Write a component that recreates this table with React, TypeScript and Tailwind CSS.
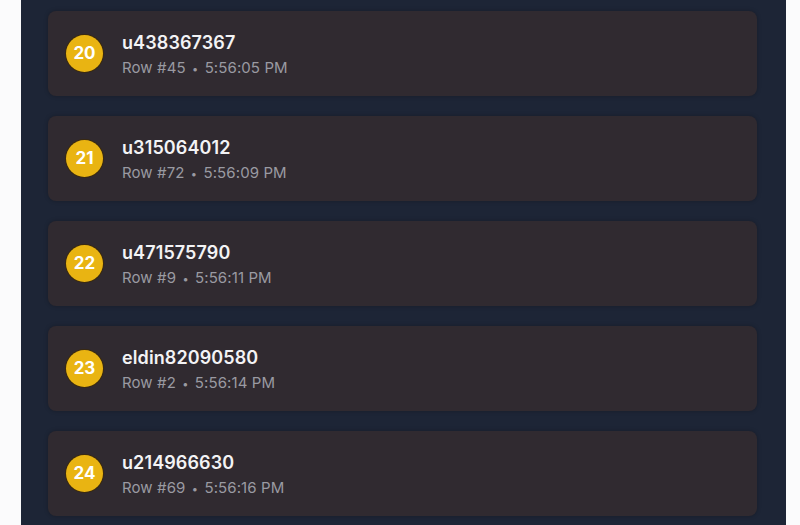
import React from "react";

type Entry = { rank: number; name: string; row: number; time: string };

const entries: Entry[] = [
  { rank: 20, name: "u438367367", row: 45, time: "5:56:05 PM" },
  { rank: 21, name: "u315064012", row: 72, time: "5:56:09 PM" },
  { rank: 22, name: "u471575790", row: 9, time: "5:56:11 PM" },
  { rank: 23, name: "eldin82090580", row: 2, time: "5:56:14 PM" },
  { rank: 24, name: "u214966630", row: 69, time: "5:56:16 PM" },
];

function EntryCard({ rank, name, row, time }: Entry) {
  return (
    <div className="flex h-[85px] items-center gap-[19px] rounded-lg bg-[#302a30] pl-[18px] shadow-[0_0_4px_rgba(0,0,0,0.25)]">
      <div className="flex h-[37px] w-[37px] shrink-0 items-center justify-center rounded-full bg-[#e9b412] text-[17px] font-bold text-white ring-1 ring-[#3a2a10]">
        {rank}
      </div>
      <div className="flex flex-col gap-[4px] pt-[3px]">
        <span className="text-[18px] font-semibold leading-[22px] tracking-[0.1px] text-[#f3f3f5]">{name}</span>
        <span className="text-[15px] leading-[20px] tracking-[0.1px] text-[#9a9aa2]">
          Row #{row} <span className="mx-[2px] text-[11px]">•</span> {time}
        </span>
      </div>
    </div>
  );
}

export default function App() {
  return (
    <div className="h-[525px] overflow-hidden bg-[#fbfbfc] pl-[21px] pr-[14px] font-['Inter',sans-serif]">
      <div className="flex h-full flex-col gap-[20px] bg-[#1d2536] pl-[27px] pr-[29px] pt-[11px]">
        {entries.map((e) => (
          <EntryCard key={e.rank} {...e} />
        ))}
      </div>
    </div>
  );
}
